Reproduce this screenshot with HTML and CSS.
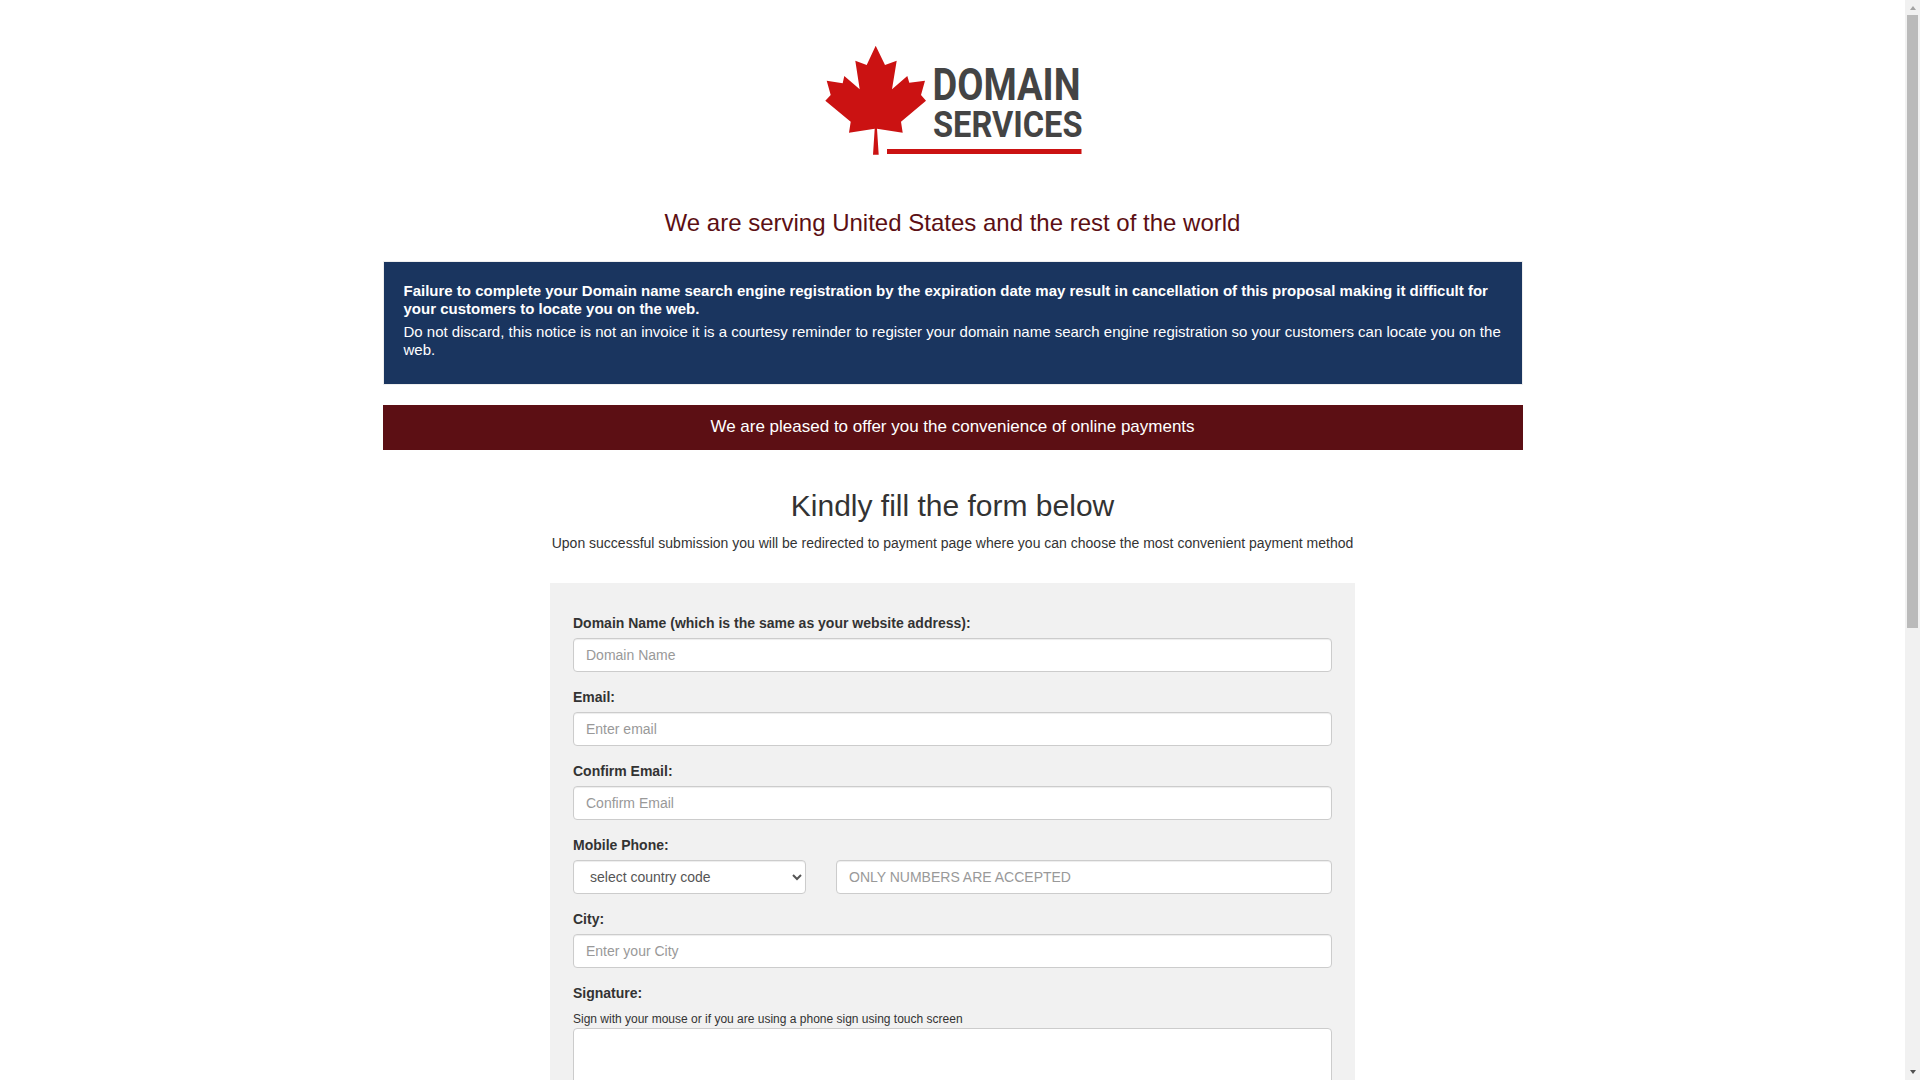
FILE: index.html
```html
<!DOCTYPE html>
<html lang="en">
<head>
<meta charset="utf-8">
<title>Domain Services</title>
<link rel="stylesheet" href="styles.css">
</head>
<body>
<div class="content">
<header class="brand">
  <svg class="logo" viewBox="800 30 305 140" width="305" height="140" role="img" aria-label="Domain Services">
    <path class="leaf" d="M875.7 45.7 885 65 896.7 60.7 892 89.3 907.3 76 909.3 82.7 925 80.7 921 95 926 100.7 901 121.7 902.7 132.7 877 128.7 878.7 154.7 873 154.7 874.7 128.7 849 132.7 850.7 121.7 825.3 100.7 830.7 95 826.7 80.7 842.7 83.3 844.3 76 859.7 89.3 855.3 60.7 866.7 65Z"/>
    <text class="logo-word" x="932.5" y="99.5" font-size="44.5" textLength="148" lengthAdjust="spacingAndGlyphs">DOMAIN</text>
    <text class="logo-word" x="933" y="136.7" font-size="37.5" textLength="149.5" lengthAdjust="spacingAndGlyphs">SERVICES</text>
    <rect class="leaf" x="887" y="149" width="194.5" height="5"/>
  </svg>
</header>
<main class="page">
  <h2 class="serving">We are serving United States and the rest of the world</h2>
  <section class="notice">
    <p class="notice-strong">Failure to complete your Domain name search engine registration by the expiration date may result in cancellation of this proposal making it difficult for your customers to locate you on the web.</p>
    <p>Do not discard, this notice is not an invoice it is a courtesy reminder to register your domain name search engine registration so your customers can locate you on the web.</p>
  </section>
  <div class="offer">We are pleased to offer you the convenience of online payments</div>
  <h1 class="title">Kindly fill the form below</h1>
  <p class="subtitle">Upon successful submission you will be redirected to payment page where you can choose the most convenient payment method</p>
  <form class="form-box">
    <div class="field">
      <label for="domain">Domain Name (which is the same as your website address):</label>
      <input id="domain" class="control" type="text" placeholder="Domain Name">
    </div>
    <div class="field">
      <label for="email">Email:</label>
      <input id="email" class="control" type="text" placeholder="Enter email">
    </div>
    <div class="field">
      <label for="confirm">Confirm Email:</label>
      <input id="confirm" class="control" type="text" placeholder="Confirm Email">
    </div>
    <div class="field">
      <label for="phone">Mobile Phone:</label>
      <div class="phone-row">
        <select class="control select" aria-label="Country code"><option>select country code</option></select>
        <input id="phone" class="control" type="text" placeholder="ONLY NUMBERS ARE ACCEPTED">
      </div>
    </div>
    <div class="field">
      <label for="city">City:</label>
      <input id="city" class="control" type="text" placeholder="Enter your City">
    </div>
    <div class="field">
      <label>Signature:</label>
      <div class="hint">Sign with your mouse or if you are using a phone sign using touch screen</div>
      <div class="signature"></div>
    </div>
  </form>
</main>
</div>
<div class="scrollbar" aria-hidden="true">
  <span class="arrow arrow-up"></span>
  <span class="thumb"></span>
  <span class="arrow arrow-down"></span>
</div>
</body>
</html>
```
FILE: styles.css
```css
* { box-sizing: border-box; }
body {
  margin: 0;
  background: #fff;
  color: #333;
  font-family: "Liberation Sans", Arial, sans-serif;
  font-size: 14px;
  line-height: 20px;
}
.content { width: 1905px; }
.scrollbar {
  position: fixed;
  top: 0;
  right: 0;
  bottom: 0;
  width: 15px;
  display: flex;
  flex-direction: column;
  align-items: center;
  background: #f1f1f1;
}
.thumb {
  width: 11px;
  height: 613px;
  margin-top: 5px;
  background: #bababa;
}
.arrow {
  width: 0;
  height: 0;
  border-left: 3.5px solid transparent;
  border-right: 3.5px solid transparent;
}
.arrow-up {
  margin-top: 6px;
  border-bottom: 4px solid #a3a3a3;
}
.arrow-down {
  margin-top: auto;
  margin-bottom: 6px;
  border-top: 4px solid #505050;
}
.brand { padding-top: 30px; }
.logo { display: block; margin: 0 auto; }
.leaf { fill: #cb1212; }
.logo-word { fill: #444; font-family: Roboto, sans-serif; font-weight: 700; }
.page { width: 1140px; margin: 0 auto; }
.serving {
  margin: 39px 0 26px;
  padding-top: 1px;
  height: 26px;
  color: #5c0f14;
  font-size: 24px;
  font-weight: 400;
  line-height: 26px;
  text-align: center;
}
.notice {
  padding: 20px 20px 14px;
  height: 124px;
  background: #1a355f;
  border: 1px solid #eee;
  color: #fff;
  font-size: 15px;
  line-height: 18px;
}
.notice p { margin: 0 0 5px; }
.notice .notice-strong { font-weight: 700; }
.offer {
  margin-top: 20px;
  height: 45px;
  background: #5c0f14;
  color: #fff;
  font-size: 17px;
  line-height: 44px;
  text-align: center;
}
.title {
  margin: 39px 0 0;
  font-size: 30px;
  font-weight: 400;
  line-height: 33px;
  text-align: center;
}
.subtitle {
  margin: 11px 0 0;
  text-align: center;
}
.form-box {
  width: 805px;
  min-height: 1240px;
  margin: 30px auto 30px;
  padding: 30px 23px;
  background: #f1f1f1;
}
.field { margin-bottom: 15px; }
label {
  display: block;
  margin-bottom: 5px;
  font-weight: 700;
}
.control {
  display: block;
  width: 100%;
  height: 34px;
  padding: 6px 12px;
  background: #fff;
  border: 1px solid #ccc;
  border-radius: 4px;
  box-shadow: inset 0 1px 1px rgba(0, 0, 0, .075);
  color: #555;
  font-family: inherit;
  font-size: 14px;
  line-height: 20px;
}
.control::placeholder { color: #999; opacity: 1; }
.phone-row {
  display: grid;
  grid-template-columns: 233px 1fr;
  column-gap: 30px;
}
.hint { padding-top: 1px; height: 20px; font-size: 12px; line-height: 20px; }
.signature {
  height: 300px;
  background: #fff;
  border: 1px solid #ccc;
  border-radius: 4px;
}
```
